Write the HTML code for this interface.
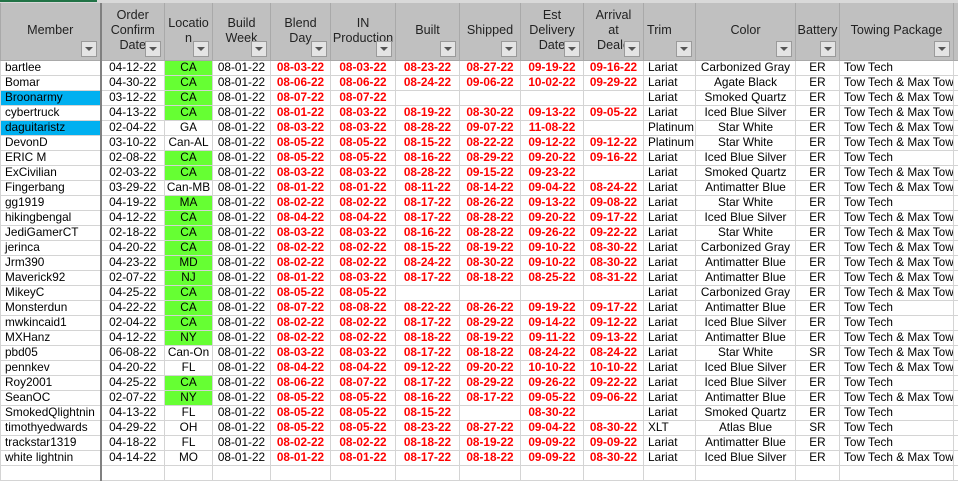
<!DOCTYPE html>
<html><head><meta charset="utf-8"><style>
*{margin:0;padding:0;box-sizing:border-box}
body{width:958px;height:469px;overflow:hidden;background:#fff;font-family:"Liberation Sans",sans-serif;font-size:11.8px;color:#000}
.top{height:3px;background:#d9d9d9;position:relative}
.top i{position:absolute;left:0;top:0;width:97px;height:2px;background:#217346}
table{border-collapse:collapse;table-layout:fixed;width:958px}
td{height:15px;border:1px solid #d4d4d4;white-space:nowrap;overflow:hidden;text-align:center;line-height:13px;padding:0 1px}
th{height:57px;background:#c0c0c0;border:1px solid #a9a9a9;border-top:none;font-weight:normal;position:relative;color:#222;line-height:15px;font-size:12.6px;vertical-align:middle;overflow:hidden;padding-bottom:1px}
.f{position:absolute;right:3px;bottom:3px;width:16px;height:16px;background:#e4e4e4;border:1px solid #9a9a9a}
.f:after{content:"";position:absolute;left:3px;top:5px;border-left:4px solid transparent;border-right:4px solid transparent;border-top:4px solid #555}
td.l{text-align:left;padding-left:4px}
td.m{text-align:left;padding-left:4px;border-right:2px solid #808080}
th.m{border-right:2px solid #808080}
.r{color:#f00;font-weight:bold}
.g{background:#66ff33}
.b{background:#00b0f0}
</style></head><body>
<div class="top"><i></i></div>
<table>
<colgroup><col style="width:100px"><col style="width:64px"><col style="width:48px"><col style="width:58px"><col style="width:60px"><col style="width:65px"><col style="width:64px"><col style="width:61px"><col style="width:63px"><col style="width:60px"><col style="width:52px"><col style="width:100px"><col style="width:44px"><col style="width:114px"><col style="width:5px"></colgroup>
<tr>
<th class="m">Member<span class="f"></span></th>
<th>Order<br>Confirm<br>Date<span class="f"></span></th>
<th>Locatio<br>n<span class="f"></span></th>
<th>Build<br>Week<span class="f"></span></th>
<th>Blend<br>Day<span class="f"></span></th>
<th>IN<br>Production<span class="f"></span></th>
<th>Built<span class="f"></span></th>
<th>Shipped<span class="f"></span></th>
<th>Est<br>Delivery<br>Date<span class="f"></span></th>
<th>Arrival<br>at<br>Deale<span class="f"></span></th>
<th style="text-align:left;padding-left:3px">Trim<span class="f"></span></th>
<th>Color<span class="f"></span></th>
<th>Battery<span class="f"></span></th>
<th>Towing Package<span class="f"></span></th>
<th></th>
</tr>
<tr><td class="m">bartlee</td><td>04-12-22</td><td class="g">CA</td><td>08-01-22</td><td class="r">08-03-22</td><td class="r">08-03-22</td><td class="r">08-23-22</td><td class="r">08-27-22</td><td class="r">09-19-22</td><td class="r">09-16-22</td><td class="l">Lariat</td><td>Carbonized Gray</td><td>ER</td><td class="l">Tow Tech</td><td></td></tr>
<tr><td class="m">Bomar</td><td>04-30-22</td><td class="g">CA</td><td>08-01-22</td><td class="r">08-06-22</td><td class="r">08-06-22</td><td class="r">08-24-22</td><td class="r">09-06-22</td><td class="r">10-02-22</td><td class="r">09-29-22</td><td class="l">Lariat</td><td>Agate Black</td><td>ER</td><td class="l">Tow Tech &amp; Max Tow</td><td></td></tr>
<tr><td class="m b">Broonarmy</td><td>03-12-22</td><td class="g">CA</td><td>08-01-22</td><td class="r">08-07-22</td><td class="r">08-07-22</td><td></td><td></td><td></td><td></td><td class="l">Lariat</td><td>Smoked Quartz</td><td>ER</td><td class="l">Tow Tech &amp; Max Tow</td><td></td></tr>
<tr><td class="m">cybertruck</td><td>04-13-22</td><td class="g">CA</td><td>08-01-22</td><td class="r">08-01-22</td><td class="r">08-03-22</td><td class="r">08-19-22</td><td class="r">08-30-22</td><td class="r">09-13-22</td><td class="r">09-05-22</td><td class="l">Lariat</td><td>Iced Blue Silver</td><td>ER</td><td class="l">Tow Tech &amp; Max Tow</td><td></td></tr>
<tr><td class="m b">daguitaristz</td><td>02-04-22</td><td>GA</td><td>08-01-22</td><td class="r">08-03-22</td><td class="r">08-03-22</td><td class="r">08-28-22</td><td class="r">09-07-22</td><td class="r">11-08-22</td><td></td><td class="l">Platinum</td><td>Star White</td><td>ER</td><td class="l">Tow Tech &amp; Max Tow</td><td></td></tr>
<tr><td class="m">DevonD</td><td>03-10-22</td><td>Can-AL</td><td>08-01-22</td><td class="r">08-05-22</td><td class="r">08-05-22</td><td class="r">08-15-22</td><td class="r">08-22-22</td><td class="r">09-12-22</td><td class="r">09-12-22</td><td class="l">Platinum</td><td>Star White</td><td>ER</td><td class="l">Tow Tech &amp; Max Tow</td><td></td></tr>
<tr><td class="m">ERIC M</td><td>02-08-22</td><td class="g">CA</td><td>08-01-22</td><td class="r">08-05-22</td><td class="r">08-05-22</td><td class="r">08-16-22</td><td class="r">08-29-22</td><td class="r">09-20-22</td><td class="r">09-16-22</td><td class="l">Lariat</td><td>Iced Blue Silver</td><td>ER</td><td class="l">Tow Tech</td><td></td></tr>
<tr><td class="m">ExCivilian</td><td>02-03-22</td><td class="g">CA</td><td>08-01-22</td><td class="r">08-03-22</td><td class="r">08-03-22</td><td class="r">08-28-22</td><td class="r">09-15-22</td><td class="r">09-23-22</td><td></td><td class="l">Lariat</td><td>Smoked Quartz</td><td>ER</td><td class="l">Tow Tech &amp; Max Tow</td><td></td></tr>
<tr><td class="m">Fingerbang</td><td>03-29-22</td><td>Can-MB</td><td>08-01-22</td><td class="r">08-01-22</td><td class="r">08-01-22</td><td class="r">08-11-22</td><td class="r">08-14-22</td><td class="r">09-04-22</td><td class="r">08-24-22</td><td class="l">Lariat</td><td>Antimatter Blue</td><td>ER</td><td class="l">Tow Tech &amp; Max Tow</td><td></td></tr>
<tr><td class="m">gg1919</td><td>04-19-22</td><td class="g">MA</td><td>08-01-22</td><td class="r">08-02-22</td><td class="r">08-02-22</td><td class="r">08-17-22</td><td class="r">08-26-22</td><td class="r">09-13-22</td><td class="r">09-08-22</td><td class="l">Lariat</td><td>Star White</td><td>ER</td><td class="l">Tow Tech</td><td></td></tr>
<tr><td class="m">hikingbengal</td><td>04-12-22</td><td class="g">CA</td><td>08-01-22</td><td class="r">08-04-22</td><td class="r">08-04-22</td><td class="r">08-17-22</td><td class="r">08-28-22</td><td class="r">09-20-22</td><td class="r">09-17-22</td><td class="l">Lariat</td><td>Iced Blue Silver</td><td>ER</td><td class="l">Tow Tech &amp; Max Tow</td><td></td></tr>
<tr><td class="m">JediGamerCT</td><td>02-18-22</td><td class="g">CA</td><td>08-01-22</td><td class="r">08-03-22</td><td class="r">08-03-22</td><td class="r">08-16-22</td><td class="r">08-28-22</td><td class="r">09-26-22</td><td class="r">09-22-22</td><td class="l">Lariat</td><td>Star White</td><td>ER</td><td class="l">Tow Tech &amp; Max Tow</td><td></td></tr>
<tr><td class="m">jerinca</td><td>04-20-22</td><td class="g">CA</td><td>08-01-22</td><td class="r">08-02-22</td><td class="r">08-02-22</td><td class="r">08-15-22</td><td class="r">08-19-22</td><td class="r">09-10-22</td><td class="r">08-30-22</td><td class="l">Lariat</td><td>Carbonized Gray</td><td>ER</td><td class="l">Tow Tech &amp; Max Tow</td><td></td></tr>
<tr><td class="m">Jrm390</td><td>04-23-22</td><td class="g">MD</td><td>08-01-22</td><td class="r">08-02-22</td><td class="r">08-02-22</td><td class="r">08-24-22</td><td class="r">08-30-22</td><td class="r">09-10-22</td><td class="r">08-30-22</td><td class="l">Lariat</td><td>Antimatter Blue</td><td>ER</td><td class="l">Tow Tech &amp; Max Tow</td><td></td></tr>
<tr><td class="m">Maverick92</td><td>02-07-22</td><td class="g">NJ</td><td>08-01-22</td><td class="r">08-01-22</td><td class="r">08-03-22</td><td class="r">08-17-22</td><td class="r">08-18-22</td><td class="r">08-25-22</td><td class="r">08-31-22</td><td class="l">Lariat</td><td>Antimatter Blue</td><td>ER</td><td class="l">Tow Tech &amp; Max Tow</td><td></td></tr>
<tr><td class="m">MikeyC</td><td>04-25-22</td><td class="g">CA</td><td>08-01-22</td><td class="r">08-05-22</td><td class="r">08-05-22</td><td></td><td></td><td></td><td></td><td class="l">Lariat</td><td>Carbonized Gray</td><td>ER</td><td class="l">Tow Tech &amp; Max Tow</td><td></td></tr>
<tr><td class="m">Monsterdun</td><td>04-22-22</td><td class="g">CA</td><td>08-01-22</td><td class="r">08-07-22</td><td class="r">08-08-22</td><td class="r">08-22-22</td><td class="r">08-26-22</td><td class="r">09-19-22</td><td class="r">09-17-22</td><td class="l">Lariat</td><td>Antimatter Blue</td><td>ER</td><td class="l">Tow Tech</td><td></td></tr>
<tr><td class="m">mwkincaid1</td><td>02-04-22</td><td class="g">CA</td><td>08-01-22</td><td class="r">08-02-22</td><td class="r">08-02-22</td><td class="r">08-17-22</td><td class="r">08-29-22</td><td class="r">09-14-22</td><td class="r">09-12-22</td><td class="l">Lariat</td><td>Iced Blue Silver</td><td>ER</td><td class="l">Tow Tech</td><td></td></tr>
<tr><td class="m">MXHanz</td><td>04-12-22</td><td class="g">NY</td><td>08-01-22</td><td class="r">08-02-22</td><td class="r">08-02-22</td><td class="r">08-18-22</td><td class="r">08-19-22</td><td class="r">09-11-22</td><td class="r">09-13-22</td><td class="l">Lariat</td><td>Antimatter Blue</td><td>ER</td><td class="l">Tow Tech &amp; Max Tow</td><td></td></tr>
<tr><td class="m">pbd05</td><td>06-08-22</td><td>Can-On</td><td>08-01-22</td><td class="r">08-03-22</td><td class="r">08-03-22</td><td class="r">08-17-22</td><td class="r">08-18-22</td><td class="r">08-24-22</td><td class="r">08-24-22</td><td class="l">Lariat</td><td>Star White</td><td>SR</td><td class="l">Tow Tech &amp; Max Tow</td><td></td></tr>
<tr><td class="m">pennkev</td><td>04-20-22</td><td>FL</td><td>08-01-22</td><td class="r">08-04-22</td><td class="r">08-04-22</td><td class="r">09-12-22</td><td class="r">09-20-22</td><td class="r">10-10-22</td><td class="r">10-10-22</td><td class="l">Lariat</td><td>Iced Blue Silver</td><td>ER</td><td class="l">Tow Tech &amp; Max Tow</td><td></td></tr>
<tr><td class="m">Roy2001</td><td>04-25-22</td><td class="g">CA</td><td>08-01-22</td><td class="r">08-06-22</td><td class="r">08-07-22</td><td class="r">08-17-22</td><td class="r">08-29-22</td><td class="r">09-26-22</td><td class="r">09-22-22</td><td class="l">Lariat</td><td>Iced Blue Silver</td><td>ER</td><td class="l">Tow Tech</td><td></td></tr>
<tr><td class="m">SeanOC</td><td>02-07-22</td><td class="g">NY</td><td>08-01-22</td><td class="r">08-05-22</td><td class="r">08-05-22</td><td class="r">08-16-22</td><td class="r">08-17-22</td><td class="r">09-05-22</td><td class="r">09-06-22</td><td class="l">Lariat</td><td>Antimatter Blue</td><td>ER</td><td class="l">Tow Tech &amp; Max Tow</td><td></td></tr>
<tr><td class="m">SmokedQlightnin</td><td>04-13-22</td><td>FL</td><td>08-01-22</td><td class="r">08-05-22</td><td class="r">08-05-22</td><td class="r">08-15-22</td><td></td><td class="r">08-30-22</td><td></td><td class="l">Lariat</td><td>Smoked Quartz</td><td>ER</td><td class="l">Tow Tech</td><td></td></tr>
<tr><td class="m">timothyedwards</td><td>04-29-22</td><td>OH</td><td>08-01-22</td><td class="r">08-05-22</td><td class="r">08-05-22</td><td class="r">08-23-22</td><td class="r">08-27-22</td><td class="r">09-04-22</td><td class="r">08-30-22</td><td class="l">XLT</td><td>Atlas Blue</td><td>SR</td><td class="l">Tow Tech</td><td></td></tr>
<tr><td class="m">trackstar1319</td><td>04-18-22</td><td>FL</td><td>08-01-22</td><td class="r">08-02-22</td><td class="r">08-02-22</td><td class="r">08-18-22</td><td class="r">08-19-22</td><td class="r">09-09-22</td><td class="r">09-09-22</td><td class="l">Lariat</td><td>Antimatter Blue</td><td>ER</td><td class="l">Tow Tech</td><td></td></tr>
<tr><td class="m">white lightnin</td><td>04-14-22</td><td>MO</td><td>08-01-22</td><td class="r">08-01-22</td><td class="r">08-01-22</td><td class="r">08-17-22</td><td class="r">08-18-22</td><td class="r">09-09-22</td><td class="r">08-30-22</td><td class="l">Lariat</td><td>Iced Blue Silver</td><td>ER</td><td class="l">Tow Tech &amp; Max Tow</td><td></td></tr>
<tr><td class="m"></td><td></td><td></td><td></td><td></td><td></td><td></td><td></td><td></td><td></td><td></td><td></td><td></td><td></td><td></td></tr>
</table>
</body></html>
